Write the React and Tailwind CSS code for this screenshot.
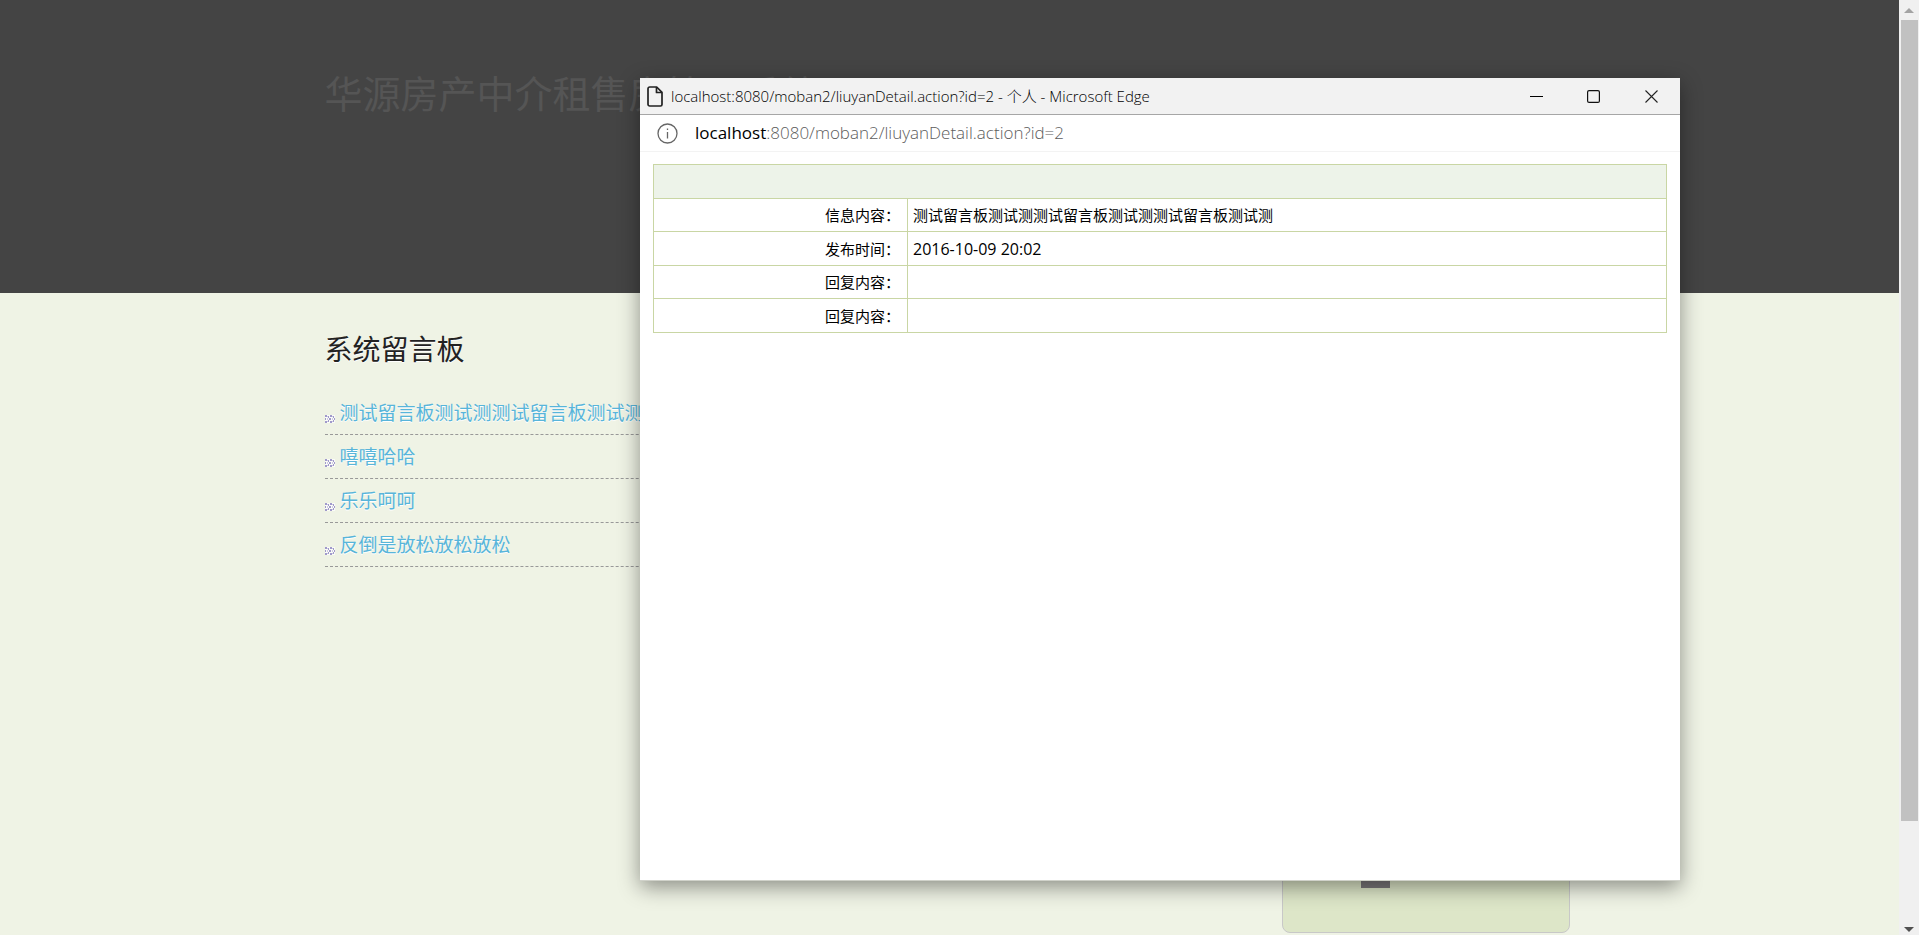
const messages = [
  { id: 1, title: '测试留言板测试测测试留言板测试测测试留言板测试测' },
  { id: 2, title: '嘻嘻哈哈' },
  { id: 3, title: '乐乐呵呵' },
  { id: 4, title: '反倒是放松放松放松' },
];

const details = [
  { label: '信息内容：', value: '测试留言板测试测测试留言板测试测测试留言板测试测' },
  { label: '发布时间：', value: <time className="text-base leading-5">2016-10-09 20:02</time> },
  { label: '回复内容：', value: '' },
  { label: '回复内容：', value: '' },
];

const BulletIcon = () => (
  <svg width="10" height="8" viewBox="0 0 10 8" shapeRendering="crispEdges" className="shrink-0" aria-hidden="true">
    <path fill="#fff" fillOpacity="0.7" d="M0 0h10v8H0z" />
    <path fill="#cdc8e4" d="M2 1h1v1H2zM7 1h1v1H7zM2 3h1v2H2zM7 3h1v2H7zM2 6h1v1H2zM7 6h1v1H7z" />
    <path
      fill="#a09acb"
      d="M0 0h2v2H0zM5 0h2v2H5zM3 1h1v2H3zM8 1h1v2H8zM0 3h1v2H0zM4 3h2v2H4zM9 3h1v2H9zM3 5h1v2H3zM8 5h1v2H8zM0 6h2v2H0zM5 6h2v2H5z"
    />
  </svg>
);

const PopupWindow = () => (
  <section className="absolute left-[640px] top-[78px] flex h-[803px] w-[1040px] flex-col border-b border-[#d0d2ca] bg-white text-black shadow-[0_6px_20px_rgba(0,0,0,0.42)]">
    {/* Title bar */}
    <div className="flex h-[37px] items-center border-b border-[#a6a6a6] bg-[#f2f2f2] pl-[7px]">
      <svg width="16" height="21" viewBox="0 0 16 21" fill="none" stroke="#222" strokeWidth="1.7" strokeLinejoin="round" aria-hidden="true">
        <path d="M2.700 1h7L15 6.300v12.200a1.500 1.500 0 0 1-1.500 1.500H2.700A1.700 1.700 0 0 1 1 18.300V2.700A1.700 1.700 0 0 1 2.700 1z" />
        <path d="M9.500 1v5.500H15" />
      </svg>
      <h2 className="ml-2 flex-1 text-[15px] font-light">localhost:8080/moban2/liuyanDetail.action?id=2 - 个人 - Microsoft Edge</h2>
      <button type="button" aria-label="最小化" className="flex h-full w-[57px] items-center justify-center">
        <svg width="13" height="13" stroke="#000" aria-hidden="true">
          <path d="M0 6.500h13" />
        </svg>
      </button>
      <button type="button" aria-label="最大化" className="flex h-full w-[57px] items-center justify-center">
        <svg width="13" height="13" fill="none" stroke="#111" strokeWidth="1.200" aria-hidden="true">
          <rect x="0.600" y="0.600" width="11.800" height="11.800" rx="1.500" />
        </svg>
      </button>
      <button type="button" aria-label="关闭" className="flex h-full w-[58px] items-center justify-center">
        <svg width="13" height="13" stroke="#222" strokeWidth="1.100" aria-hidden="true">
          <path d="M0.500 0.500l12 12M12.500 0.500l-12 12" />
        </svg>
      </button>
    </div>

    {/* Address bar */}
    <div className="flex h-[37px] items-center border-b border-[#f3f3f3] pl-[17px]">
      <svg width="21" height="21" viewBox="0 0 21 21" fill="none" stroke="#666" strokeWidth="1.300" aria-hidden="true">
        <circle cx="10.500" cy="10.500" r="9.500" />
        <path d="M10.500 9v6.500M10.500 5.500v1.600" />
      </svg>
      <p className="ml-[17px] text-[17px] font-light text-[#5c5c5c]">
        <span className="font-normal text-black">localhost</span>:8080/moban2/liuyanDetail.action?id=2
      </p>
    </div>

    <div className="px-[13px] py-3">
      <table className="w-full border-collapse text-[15px] leading-5">
        <thead>
          <tr className="h-[34px]">
            <th colSpan="2" className="border border-[#c9d6a4] bg-[#edf3e9]" />
          </tr>
        </thead>
        <tbody>
          {details.map((row, i) => (
            <tr key={i} className="odd:h-[33px] even:h-[34px]">
              <th scope="row" className="w-[254px] border border-[#c9d6a4] pr-[7px] text-right font-normal">
                {row.label}
              </th>
              <td className="border border-[#c9d6a4] pl-[5px]">{row.value}</td>
            </tr>
          ))}
        </tbody>
      </table>
    </div>
  </section>
);

const ScrollBar = () => (
  <div className="flex w-5 shrink-0 flex-col items-center bg-[#f0f0f0]" aria-hidden="true">
    <div className="flex h-5 items-center">
      <svg width="10" height="5" fill="#a3a3a3">
        <path d="M5 0l5 5H0z" />
      </svg>
    </div>
    <div className="min-h-0 w-[17px] flex-[801] bg-[#c1c1c1]" />
    <div className="flex-[106]" />
    <div className="flex h-2 items-start">
      <svg width="10" height="5" fill="#505050">
        <path d="M0 0h10L5 5z" />
      </svg>
    </div>
  </div>
);

const App = () => {
  return (
    <div className="relative flex h-screen overflow-hidden bg-[#eff3e5] font-['Open_Sans','Noto_Sans_CJK_SC',sans-serif]">
      <div className="flex min-w-0 flex-1 flex-col">
        <header className="h-[293px] bg-[#444]">
          <div className="mx-auto max-w-[1250px] pt-[66px]">
            <h1 className="text-[38px] leading-[54px] text-[#555]">华源房产中介租售房管理系统</h1>
          </div>
        </header>

        <main className="mx-auto flex w-full max-w-[1250px] flex-1 justify-between">
          <div className="w-[900px] pt-9">
            <h2 className="text-[28px] leading-10 text-[#222] [text-shadow:0_1px_0_#fff]">系统留言板</h2>
            <ul className="mt-[22px]">
              {messages.map((msg) => (
                <li key={msg.id} className="flex h-11 items-center border-b border-dashed border-[#999]">
                  <span className="mt-3">
                    <BulletIcon />
                  </span>
                  <a href={`#${msg.id}`} className="ml-[5px] text-[19px] leading-7 text-[#58b5da] [text-shadow:0_1px_0_#fff]">
                    {msg.title}
                  </a>
                </li>
              ))}
            </ul>
          </div>

          <aside className="mr-[5px] mb-[2px] flex w-[288px] items-end self-end rounded-lg border border-[#c8c8c8] bg-[#dde6c8] pt-40 pb-11 pl-[78px]">
            <div className="h-10 w-[29px] bg-[#7a777a]" />
          </aside>
        </main>
      </div>

      <ScrollBar />
      <PopupWindow />
    </div>
  );
};

export default App;
